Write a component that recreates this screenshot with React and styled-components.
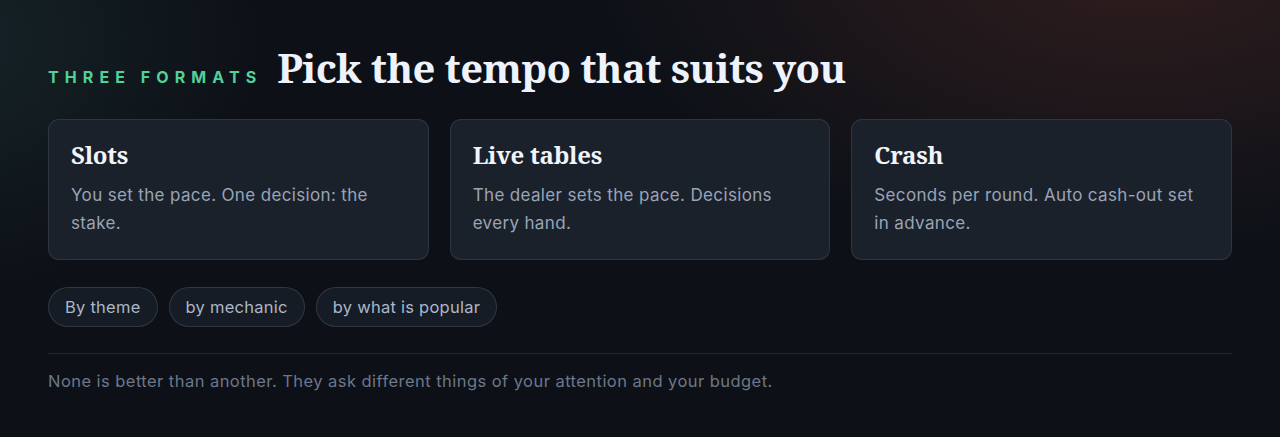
import React from 'react';
import styled, { createGlobalStyle } from 'styled-components';

const GlobalStyle = createGlobalStyle`
  html, body {
    margin: 0;
    padding: 0;
    background: #0d1117;
  }
  body {
    font-family: Inter, "Noto Sans", sans-serif;
  }
`;

const Section = styled.section`
  box-sizing: border-box;
  width: 1280px;
  height: 437px;
  padding: 44px 48px 0;
  background:
    radial-gradient(ellipse 720px 380px at 1140px -40px, rgba(110, 50, 42, 0.36), transparent 75%),
    radial-gradient(ellipse 440px 340px at -60px 40px, rgba(40, 75, 75, 0.32), transparent 72%),
    #0d1117;
`;

const Header = styled.header`
  display: flex;
  align-items: baseline;
  gap: 15px;
  margin-bottom: 27px;
`;

const Eyebrow = styled.span`
  font-size: 16px;
  font-weight: 700;
  letter-spacing: 0.38em;
  text-transform: uppercase;
  color: #52d09a;
`;

const Title = styled.h2`
  margin: 0;
  font-family: "Noto Serif", "DejaVu Serif", serif;
  font-size: 40px;
  font-weight: 700;
  letter-spacing: -0.015em;
  color: #eef2fb;
  line-height: 48px;
`;

const Cards = styled.div`
  display: grid;
  grid-template-columns: repeat(3, 1fr);
  gap: 21px;
`;

const Card = styled.article`
  padding: 20px 22px 22px;
  background: #1b212b;
  border: 1px solid rgba(255, 255, 255, 0.09);
  border-radius: 11px;
`;

const CardTitle = styled.h3`
  margin: 0 0 11px;
  font-family: "Noto Serif", "DejaVu Serif", serif;
  font-size: 24px;
  font-weight: 700;
  letter-spacing: -0.01em;
  color: #f1f4fa;
  line-height: 30px;
`;

const CardText = styled.p`
  margin: 0;
  font-size: 17px;
  letter-spacing: 0.35px;
  line-height: 28px;
  color: #99a4b7;
`;

const Chips = styled.div`
  display: flex;
  gap: 11px;
  margin-top: 27px;
`;

const Chip = styled.button`
  font-family: Inter, "Noto Sans", sans-serif;
  font-size: 16.5px;
  letter-spacing: 0.25px;
  height: 40px;
  padding: 0 16px;
  border-radius: 20px;
  background: #161c25;
  border: 1px solid rgba(255, 255, 255, 0.12);
  color: #acb7c9;
  cursor: pointer;
`;

const Divider = styled.hr`
  margin: 26px 0 0;
  border: 0;
  border-top: 1px solid rgba(255, 255, 255, 0.09);
`;

const Footnote = styled.p`
  margin: 15px 0 0;
  font-size: 16.5px;
  letter-spacing: 0.45px;
  line-height: 24px;
  color: #6c778a;
`;

const formats = [
  { title: 'Slots', text: 'You set the pace. One decision: the stake.' },
  { title: 'Live tables', text: 'The dealer sets the pace. Decisions every hand.' },
  { title: 'Crash', text: 'Seconds per round. Auto cash-out set in advance.' },
];

const filters = ['By theme', 'by mechanic', 'by what is popular'];

const App = () => {
  return (
    <>
      <GlobalStyle />
      <Section>
        <Header>
          <Eyebrow>Three formats</Eyebrow>
          <Title>Pick the tempo that suits you</Title>
        </Header>
        <Cards>
          {formats.map((f) => (
            <Card key={f.title}>
              <CardTitle>{f.title}</CardTitle>
              <CardText>{f.text}</CardText>
            </Card>
          ))}
        </Cards>
        <Chips>
          {filters.map((label) => (
            <Chip key={label}>{label}</Chip>
          ))}
        </Chips>
        <Divider />
        <Footnote>
          None is better than another. They ask different things of your attention and your budget.
        </Footnote>
      </Section>
    </>
  );
};

export default App;
